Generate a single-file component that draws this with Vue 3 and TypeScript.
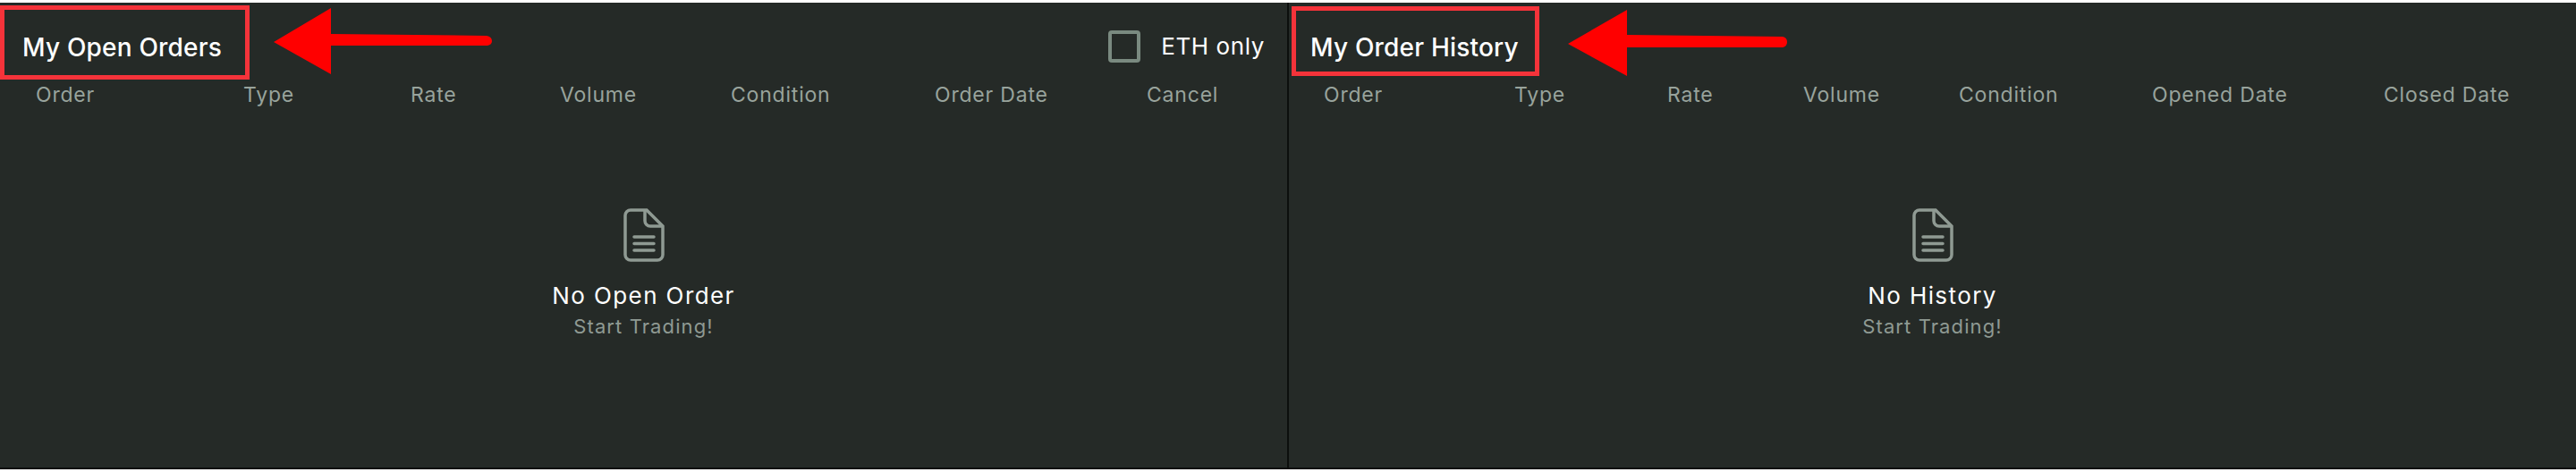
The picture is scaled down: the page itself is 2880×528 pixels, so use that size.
<script setup lang="ts">
const openCols: string[] = ['Order', 'Type', 'Rate', 'Volume', 'Condition', 'Order Date', 'Cancel']
const historyCols: string[] = ['Order', 'Type', 'Rate', 'Volume', 'Condition', 'Opened Date', 'Closed Date']
</script>

<template>
  <div class="page">
    <main class="board">
      <section class="panel panel-open">
        <header class="panel-head">
          <h2 class="title title-open">My Open Orders</h2>
          <label class="filter">
            <span class="check"></span>
            <span class="filter-text">ETH only</span>
          </label>
        </header>
        <div class="cols cols-open">
          <span v-for="c in openCols" :key="c">{{ c }}</span>
        </div>
        <div class="empty">
          <svg class="doc" viewBox="0 0 46 60" width="46" height="60" fill="none">
            <path d="M8 2H26L44 20V52A6 6 0 0 1 38 58H8A6 6 0 0 1 2 52V8A6 6 0 0 1 8 2Z" />
            <path d="M24 2V14A6 6 0 0 0 30 20H44" />
            <path d="M12 32H34M12 39.500H34M12 47H34" stroke-linecap="round" />
          </svg>
          <p class="empty-title">No Open Order</p>
          <p class="empty-sub">Start Trading!</p>
        </div>
      </section>
      <section class="panel panel-history">
        <header class="panel-head">
          <h2 class="title title-history">My Order History</h2>
        </header>
        <div class="cols cols-history">
          <span v-for="c in historyCols" :key="c">{{ c }}</span>
        </div>
        <div class="empty">
          <svg class="doc" viewBox="0 0 46 60" width="46" height="60" fill="none">
            <path d="M8 2H26L44 20V52A6 6 0 0 1 38 58H8A6 6 0 0 1 2 52V8A6 6 0 0 1 8 2Z" />
            <path d="M24 2V14A6 6 0 0 0 30 20H44" />
            <path d="M12 32H34M12 39.500H34M12 47H34" stroke-linecap="round" />
          </svg>
          <p class="empty-title">No History</p>
          <p class="empty-sub">Start Trading!</p>
        </div>
      </section>
    </main>
    <svg class="arrow arrow-one" viewBox="0 0 244 74" width="244" height="74">
      <path d="M0 38L64 0V29L238 31Q244 32 244 37Q244 41 239 42L64 42V74Z" fill="#ff0000" />
    </svg>
    <svg class="arrow arrow-two" viewBox="0 0 245 74" width="245" height="74">
      <path d="M0 38L66 0V28L240 30Q245 31 245 36Q245 41 240 42L66 42V74Z" fill="#ff0000" />
    </svg>
  </div>
</template>

<style>
html, body { margin: 0; background: #fff; }
</style>

<style scoped>
.page {
  position: relative;
  width: 2880px;
  height: 528px;
  padding-top: 3px;
  box-sizing: border-box;
  background: #fff;
  font-family: Inter, "Liberation Sans", sans-serif;
}
.board {
  display: flex;
  height: 522px;
  box-sizing: border-box;
  background: #252a27;
  border-bottom: 2px solid #0c0f0d;
}
.panel { height: 520px; box-sizing: border-box; }
.panel-open { flex: 0 0 1439px; }
.panel-history { flex: 0 0 1441px; border-left: 2px solid #0c0f0d; }
.panel-head {
  display: flex;
  justify-content: space-between;
  align-items: flex-start;
  height: 89px;
}
.title {
  margin: 0;
  box-sizing: border-box;
  border: 5px solid #f5333a;
  font-size: 28px;
  font-weight: 500;
  line-height: 30px;
  color: #fff;
  letter-spacing: 0.2px;
  white-space: nowrap;
}
.title-open {
  margin-top: 3px;
  width: 279px;
  height: 83px;
  padding: 27px 0 0 20px;
}
.title-history {
  margin: 4px 0 0 3px;
  width: 277px;
  height: 78px;
  padding: 26px 0 0 16px;
}
.filter {
  display: flex;
  align-items: center;
  gap: 23px;
  margin: 30px 25px 0 0;
}
.check {
  width: 36px;
  height: 36px;
  box-sizing: border-box;
  border: 4px solid #7a8a80;
  border-radius: 4px;
}
.filter-text {
  font-size: 26px;
  line-height: 38px;
  color: #fff;
  letter-spacing: 0.6px;
}
.cols {
  display: grid;
  font-size: 23px;
  line-height: 28px;
  color: #98a39c;
  letter-spacing: 0.8px;
  white-space: nowrap;
}
.cols-open {
  grid-template-columns: 232px 187px 167px 191px 228px 237px auto;
  padding-left: 40px;
}
.cols-history {
  grid-template-columns: 213px 171px 152px 174px 216px 259px auto;
  padding-left: 39px;
}
.empty {
  display: flex;
  flex-direction: column;
  align-items: center;
  margin-top: 113px;
}
.doc { stroke: #8f9a93; stroke-width: 3.5; }
.empty-title {
  margin: 20px 0 0;
  font-size: 26px;
  line-height: 36px;
  color: #fff;
  letter-spacing: 1.4px;
}
.empty-sub {
  margin: 2px 0 0;
  font-size: 22px;
  line-height: 28px;
  color: #8f9a93;
  letter-spacing: 1.1px;
}
.arrow { position: absolute; }
.arrow-one { left: 306px; top: 9px; }
.arrow-two { left: 1753px; top: 11px; }
</style>
